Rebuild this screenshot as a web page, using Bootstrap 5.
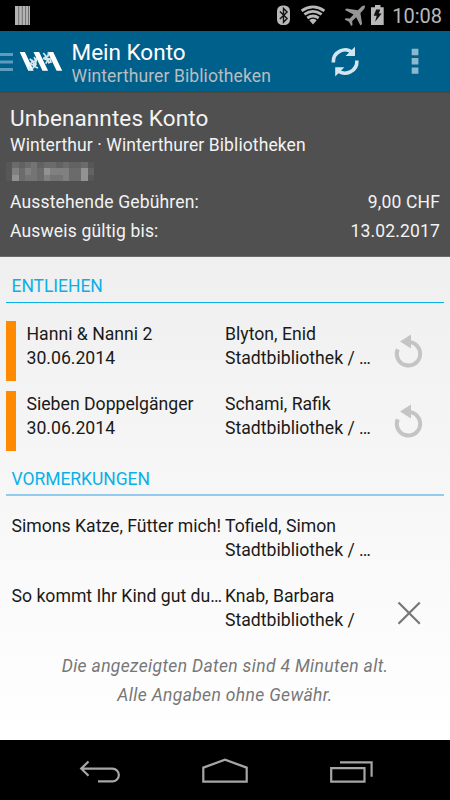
<!DOCTYPE html>
<html lang="de">
<head>
<meta charset="utf-8">
<meta name="viewport" content="width=device-width, initial-scale=1">
<title>Mein Konto</title>
<link href="https://cdn.jsdelivr.net/npm/bootstrap@5.3.0/dist/css/bootstrap.min.css" rel="stylesheet">
<style>
  body { font-family: Roboto, "Noto Sans", sans-serif; background: #000; font-size: 17.5px; letter-spacing: .1px; }
  .screen { width: 450px; height: 800px; }
  svg { display: block; flex: none; }
  .status-bar { height: 31px; color: #b9b9b9; padding: 0 8px 0 15px; }
  .clock { font-size: 20px; line-height: 32px; letter-spacing: 0; margin-left: 7px; }
  .app-bar { height: 60px; background: #00608c; padding-right: 29px; }
  .app-title { font-size: 22.5px; line-height: 26px; color: #fff; letter-spacing: 0; }
  .app-subtitle { line-height: 22px; color: #b9bdbf; }
  .app-titles { margin-left: 8.5px; padding-top: 8px; }
  .account { height: 166px; background: #505050; border-top: 2px solid #484643; border-bottom: 1px solid #6a6a6a; color: #f3f3f3; padding: 9px 10px 0; }
  .account-name { font-size: 22.5px; line-height: 32px; }
  .account-line { line-height: 22px; }
  .fee-row { line-height: 28.5px; letter-spacing: .17px; }
  .masked { margin: 6px 0 7px -4px; }
  .content { height: 483px; background: linear-gradient(#efefef, #fff); color: #1a1a1a; padding: 18px 6px 0; }
  .section-title { color: #0ab0e8; border-bottom: 1px solid #0ab0e8; padding-left: 5.5px; line-height: 22px; height: 28px; letter-spacing: -.05px; margin-bottom: 18px; }
  .section-title.soft { border-bottom: 2px solid #93cbee; height: 28px; line-height: 23px; margin: 17px 0; }
  .item { height: 60px; line-height: 24px; margin-bottom: 10px; font-size: 17.65px; letter-spacing: 0; }
  .status-mark { width: 10px; background: #ff8a00; }
  .item-title, .item-meta { padding-top: 1px; }
  .item-title { width: 209px; padding-left: 10.5px; }
  .item-title.wide { width: 219px; padding-left: 5.5px; }
  .item-meta { width: 152px; }
  .footnote { color: #777; line-height: 28.5px; letter-spacing: .34px; margin-top: -1px; }
  .system-nav { height: 60px; }
</style>
</head>
<body>
<main class="screen d-flex flex-column overflow-hidden">
  <div class="status-bar d-flex">
    <svg class="me-auto" width="16" height="31" viewBox="15 0 16 31"><path fill="#b4b4b4" d="M15 6h15v19H15z"/><path stroke="#686868" stroke-width=".9" d="M18.7 6v19M22.3 6v19M25.6 6v19M28.5 6v19"/></svg>
    <svg width="109" height="31" viewBox="277 0 109 31" fill="#b9b9b9">
      <rect x="278" y="5.5" width="13" height="19.5" rx="5.5"/>
      <path d="M280.9 11.5l7.2 7-3.6 3.7V8.5l3.6 3.6-7.2 7" fill="none" stroke="#111" stroke-width="1.4"/>
      <path d="M314 24.5l-3.7-4.3q3.7-2.7 7.4 0z"/>
      <g fill="none" stroke="#b9b9b9" stroke-width="2.8"><path d="M308.3 18q5.7-4 11.4 0M305.4 14.4q8.6-6 17.2 0M302.6 10.8q11.4-7.8 22.8 0"/></g>
      <path fill="#969696" d="M365.7 5.5c-1.6-.5-3.1.9-4.5 2.4l-2.4 2.4-11.4-1.8-1.5 1.6 8.7 4.4-3.8 4.1-4.1-.3-1.1 1.2 4.4 2.3 2.2 4.3 1.3-1.1-.3-4 4-3.8 4.2 8.2 1.7-1.5-1.7-11 2.4-2.5c1.5-1.4 2.7-3.5 1.9-4.9z"/>
      <path d="M376 5h5.5v2.2h3.2V25h-12.7V7.2h4z"/><path fill="#111" d="M377.2 9.5h4l-1.4 4h2.9l-6.6 8.2 1.6-6h-3z"/>
    </svg>
    <span class="clock">10:08</span>
  </div>

  <header class="app-bar d-flex">
    <svg width="63" height="60" viewBox="0 31 63 60">
      <path fill="#5d9cbc" d="M0 53h13v3H0zM0 60.5h13v3H0zM0 68h13v3H0z"/>
      <path fill="#fff" d="M19.7 52h5.2l8.8 18.8h-5.4zM33.5 52h5.6l9 18.8h-5.6zM47.6 52h5.6l9 18.8h-5.6z"/>
      <g fill="none" stroke="#d5e7ef" stroke-width="1.7"><path d="M29.7 59l2.8 2-2 3.2 4 1.2-2.5 4M34.2 57l1.3 3.5-2.8 2 4 2.3M36.6 58l-1.6 8.8 3 1.2M43.3 53l2.6 3-2 2.7 4 1.4-2.2 3.5M48.7 52l-.7 4-3 1.6 4.5 1.5M49.7 58l1.3 4-3 1M28.5 66.5l2 3.5M32 60l3 6M45 56l4 6"/></g>
    </svg>
    <div class="app-titles me-auto">
      <div class="app-title">Mein Konto</div>
      <div class="app-subtitle">Winterthurer Bibliotheken</div>
    </div>
    <svg width="90" height="60" viewBox="331 31 90 60">
      <g fill="none" stroke="#d3e6ef" stroke-width="3.6"><path d="M333.3 62.5c-.5-10.5 11.5-16.8 20-9.4"/><path d="M356.9 60.5c.5 10.5-11.5 16.8-20 9.4"/></g>
      <path fill="#d3e6ef" d="M355 46.7v9.4h-9.4zM335.2 76.5v-9.2h9.2z"/>
      <path fill="#8cb8ce" d="M411.7 48.8h6.7v6.4h-6.7zM411.7 58h6.7v6.4h-6.7zM411.7 67.4h6.7v6.4h-6.7z"/>
    </svg>
  </header>

  <section class="account">
    <div class="account-name">Unbenanntes Konto</div>
    <div class="account-line">Winterthur · Winterthurer Bibliotheken</div>
    <svg class="masked" width="88" height="19" viewBox="0 0 14 3" preserveAspectRatio="none" shape-rendering="crispEdges">
      <path fill="#575757" d="M0 0h14v3H0z"/>
      <path fill="#6b6b6b" d="M1 0h1v1H1zM3 0h1v1H3zM6 0h2v1H6zM9 0h1v1H9zM12 0h1v1H12zM2 1h1v1H2zM5 1h1v1H5zM10 1h2v1H10zM2 2h1v1H2zM5 2h1v1H5zM10 2h2v1H10z"/>
      <path fill="#626262" d="M2 0h1v1H2zM5 0h1v1H5zM8 0h1v1H8zM10 0h2v1H10zM13 1h1v1H13z"/>
      <path fill="#747474" d="M4 0h1v1H4zM4 1h1v1H4zM3 2h2v1H3zM7 2h2v1H7z"/>
      <path fill="#808080" d="M1 1h1v1H1zM3 1h1v1H3zM7 1h3v1H7zM6 2h1v1H6zM9 2h1v1H9z"/>
      <path fill="#929292" d="M6 1h1v1H6zM12 1h1v1H12zM1 2h1v1H1zM12 2h1v1H12z"/>
    </svg>
    <div class="fee-row d-flex justify-content-between"><span>Ausstehende Gebühren:</span><span>9,00 CHF</span></div>
    <div class="fee-row d-flex justify-content-between"><span>Ausweis gültig bis:</span><span>13.02.2017</span></div>
  </section>

  <section class="content">
    <div class="section-title">ENTLIEHEN</div>
    <div class="item d-flex">
      <span class="status-mark"></span>
      <div class="item-title text-nowrap">Hanni &amp; Nanni 2<br>30.06.2014</div>
      <div class="item-meta text-nowrap">Blyton, Enid<br>Stadtbibliothek / …</div>
      <svg class="ms-3" width="32" height="60" viewBox="0 0 32 60"><path fill="none" stroke="#c4c4c4" stroke-width="4" d="M4.7 28.2A11.7 11.7 0 1 0 16 21.1"/><path fill="#c4c4c4" d="M18 13.6v13.8l-11-7z"/></svg>
    </div>
    <div class="item d-flex">
      <span class="status-mark"></span>
      <div class="item-title text-nowrap">Sieben Doppelgänger<br>30.06.2014</div>
      <div class="item-meta text-nowrap">Schami, Rafik<br>Stadtbibliothek / …</div>
      <svg class="ms-3" width="32" height="60" viewBox="0 0 32 60"><path fill="none" stroke="#c4c4c4" stroke-width="4" d="M4.7 28.2A11.7 11.7 0 1 0 16 21.1"/><path fill="#c4c4c4" d="M18 13.6v13.8l-11-7z"/></svg>
    </div>

    <div class="section-title soft">VORMERKUNGEN</div>
    <div class="item d-flex">
      <div class="item-title wide text-nowrap">Simons Katze, Fütter mich!</div>
      <div class="item-meta text-nowrap">Tofield, Simon<br>Stadtbibliothek / …</div>
    </div>
    <div class="item d-flex">
      <div class="item-title wide text-nowrap">So kommt Ihr Kind gut du…</div>
      <div class="item-meta text-nowrap">Knab, Barbara<br>Stadtbibliothek /</div>
      <svg class="ms-3" width="32" height="60" viewBox="0 0 32 60"><path stroke="#777" stroke-width="2.2" d="M5.5 19.5l21.3 21.3M26.8 19.5L5.5 40.8"/></svg>
    </div>
    <div class="footnote fst-italic text-center">Die angezeigten Daten sind 4 Minuten alt.<br>Alle Angaben ohne Gewähr.</div>
  </section>

  <nav class="system-nav">
    <svg width="450" height="60" viewBox="0 740 450 60" fill="none" stroke="#a6a6a6" stroke-width="2.2">
      <path d="M98 781.3h14.5a6.3 6.3 0 0 0 0-12.7H81M88.5 761.5l-7.3 7.1 7.3 7.2"/>
      <path d="M203.3 781.6v-14l21.7-7.9 21.7 7.9v14z"/>
      <path d="M331.2 768.2h33.3v13.4h-33.3zM340 762.4h31.6v14.3"/>
    </svg>
  </nav>
</main>
<script src="https://cdn.jsdelivr.net/npm/bootstrap@5.3.0/dist/js/bootstrap.bundle.min.js"></script>
</body>
</html>
